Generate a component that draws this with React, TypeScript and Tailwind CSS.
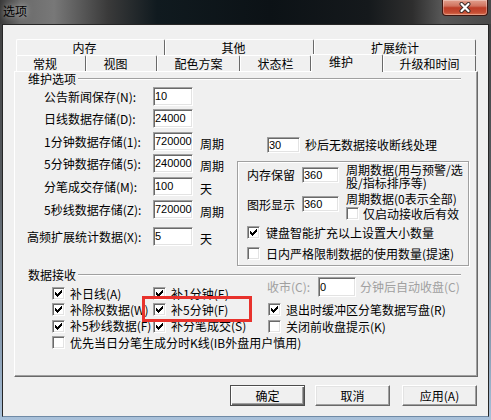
import React from 'react';

const CK =
  'M6 0h1v1h-1zM5 1h2v1h-2zM0 2h1v1h-1zM4 2h3v1h-3zM0 3h2v1h-2zM3 3h3v1h-3zM0 4h5v1h-5zM1 5h3v1h-3zM2 6h1v1h-1z';

function Box({ on }: { on?: boolean }) {
  return (
    <span className="flex h-[13px] w-[13px] shrink-0 items-center justify-center border border-t-[#a0a0a0] border-l-[#a0a0a0] border-r-white border-b-white bg-white shadow-[inset_1px_1px_0_#696969,inset_-1px_-1px_0_#e3e3e3]">
      {on && (
        <svg width="7" height="7" viewBox="0 0 7 7" shapeRendering="crispEdges">
          <path d={CK} fill="#000" />
        </svg>
      )}
    </span>
  );
}

function Field({ v, cls }: { v: string; cls: string }) {
  return (
    <div
      className={`flex shrink-0 items-center overflow-hidden border border-t-[#a0a0a0] border-l-[#a0a0a0] border-r-white border-b-white bg-white pl-[1px] font-['Liberation_Sans',sans-serif] text-[11px] leading-none shadow-[inset_1px_1px_0_#696969,inset_-1px_-1px_0_#e3e3e3] ${cls}`}
    >
      {v}
    </div>
  );
}

function GroupHead({ title }: { title: string }) {
  return (
    <div className="flex h-[12px] w-[446px] items-center pl-[11px]">
      <span className="whitespace-nowrap px-[2px]">{title}</span>
      <span className="h-[2px] flex-1 border-t border-b border-t-[#a0a0a0] border-b-white" />
    </div>
  );
}

function Tab({ children, cls }: { children: React.ReactNode; cls: string }) {
  return (
    <div
      className={`flex h-full shrink-0 items-center justify-center rounded-t-[2px] border-t border-l border-r border-t-white border-l-white border-r-[#696969] bg-[#f0f0f0] whitespace-nowrap ${cls}`}
    >
      {children}
    </div>
  );
}

function Btn({ children, def, cls }: { children: React.ReactNode; def?: boolean; cls?: string }) {
  return (
    <div
      className={`flex h-[21px] w-[75px] items-center justify-center bg-[#f0f0f0] ${
        def
          ? 'border border-[#4d4d4d] shadow-[inset_1px_1px_0_#fff,inset_-1px_-1px_0_#696969,inset_-2px_-2px_0_#a0a0a0]'
          : 'border border-t-white border-l-white border-r-[#696969] border-b-[#696969] shadow-[inset_-1px_-1px_0_#a0a0a0,inset_1px_1px_0_#e3e3e3]'
      } ${cls ?? ''}`}
    >
      {children}
    </div>
  );
}

const rows = [
  { l: '公告新闻保存(N):', v: '10', mt: '', u: '' },
  { l: '日线数据存储(D):', v: '24000', mt: 'mt-[3px]', u: '' },
  { l: '1分钟数据存储(1):', v: '720000', mt: 'mt-[4px]', u: '周期' },
  { l: '5分钟数据存储(5):', v: '240000', mt: 'mt-[3px]', u: '周期' },
  { l: '分笔成交存储(M):', v: '100', mt: 'mt-[4px]', u: '天' },
  { l: '5秒线数据存储(Z):', v: '720000', mt: 'mt-[4px]', u: '周期' },
];

const grid: [string, boolean][] = [
  ['补日线(A)', true],
  ['补1分钟(E)', true],
  ['补除权数据(W)', true],
  ['补5分钟(F)', true],
  ['补5秒线数据(F)', true],
  ['补分笔成交(S)', true],
];

export default function App() {
  return (
    <div className="h-[420px] w-[491px] overflow-hidden bg-[linear-gradient(180deg,#3d3d3d_0%,#585d62_45%,#8ea3b9_85%,#a9c1da_100%)] font-['Noto_Sans_CJK_SC',sans-serif] text-[12px] leading-[12px] text-black">
      {/* title bar */}
      <div className="flex h-[24px] items-start justify-between bg-[linear-gradient(90deg,#393939_0%,#6a6a6a_4%,#787878_11%,#3a3a3a_22%,#101a1f_32%,#0c1216_55%,#15191c_75%,#2e2e2e_84%,#575757_90%,#4a4a4a_100%)]">
        <span className="ml-[3px] mt-[5px] [text-shadow:0_0_6px_rgba(255,255,255,0.75)]">选项</span>
        <div className="mr-[3px] flex h-[16px] w-[46px] items-center justify-center rounded-b-[4px] border border-t-0 border-[#3f1610] bg-[linear-gradient(180deg,#e2a08e_0%,#d0735f_40%,#bd3d27_52%,#c44c33_82%,#dc7553_100%)] shadow-[inset_0_0_0_1px_rgba(255,255,255,0.3)]">
          <svg width="12" height="11" viewBox="0 0 12 11">
            <path d="M2.5 2 L9.5 9 M9.5 2 L2.5 9" stroke="#3a2a28" strokeWidth="4" strokeLinecap="round" />
            <path d="M2.5 2 L9.5 9 M9.5 2 L2.5 9" stroke="#fff" strokeWidth="2.2" strokeLinecap="round" />
          </svg>
        </div>
      </div>

      {/* client */}
      <div className="ml-[2px] h-[393px] w-[487px] border border-[#262626] border-b-[#6f8aa6] bg-[#f0f0f0]">
        {/* tabs */}
        <div className="ml-[13px] mt-[14px] w-[460px]">
          <div className="flex h-[16px]">
            <Tab cls="w-[149px] pr-[12px]">内存</Tab>
            <Tab cls="w-[149px] pr-[12px]">其他</Tab>
            <Tab cls="w-[162px]">扩展统计</Tab>
          </div>
          <div className="flex h-[16px] items-end">
            <Tab cls="w-[70px] pr-[12px]">常规</Tab>
            <Tab cls="w-[71px] pr-[12px]">视图</Tab>
            <Tab cls="w-[83px]">配色方案</Tab>
            <Tab cls="w-[71px]">状态栏</Tab>
            <div className="relative z-10 -mb-px flex h-[18px] w-[72px] shrink-0 items-start justify-center rounded-t-[2px] border-t border-l border-r border-t-white border-l-white border-r-[#696969] bg-[#f0f0f0] pr-[12px] pt-[1px]">
              维护
            </div>
            <Tab cls="w-[93px]">升级和时间</Tab>
          </div>
        </div>

        {/* panel */}
        <div className="relative ml-[11px] h-[306px] w-[464px] border border-t-white border-l-white border-r-[#696969] border-b-[#696969] shadow-[inset_-1px_-1px_0_#a0a0a0]">
          <div className="mt-[1px]">
            <GroupHead title="维护选项" />
          </div>
          <div className="mt-[2px] flex">
            <div className="w-[222px] shrink-0">
              {rows.map((r) => (
                <div key={r.l} className={`flex h-[19px] items-center pl-[29px] ${r.mt}`}>
                  <span className="w-[109px] whitespace-nowrap">{r.l}</span>
                  <Field v={r.v} cls="h-[19px] w-[40px]" />
                  {r.u && <span className="ml-[7px] mt-[4px]">{r.u}</span>}
                </div>
              ))}
              <div className="mt-[8px] flex h-[19px] items-center pl-[12px]">
                <span className="w-[126px] whitespace-nowrap">高频扩展统计数据(X):</span>
                <Field v="5" cls="h-[19px] w-[40px]" />
                <span className="ml-[7px] mt-[4px]">天</span>
              </div>
            </div>
            <div className="pt-[50px]">
              <div className="flex h-[16px] items-center pl-[30px]">
                <Field v="30" cls="h-[16px] w-[33px]" />
                <span className="ml-[5px] whitespace-nowrap">秒后无数据接收断线处理</span>
              </div>
              <div className="mt-[8px] h-[105px] w-[232px] border border-[#a0a0a0] shadow-[inset_1px_1px_0_#fff,1px_1px_0_#fff]">
                <div className="mt-[2px] flex h-[24px] items-start">
                  <span className="ml-[9px] mt-[5px] w-[55px] whitespace-nowrap">内存保留</span>
                  <Field v="360" cls="mt-[3px] h-[16px] w-[37px]" />
                  <div className="-mt-[1px] ml-[7px] whitespace-nowrap leading-[13px]">
                    周期数据(用与预警/选
                    <br />
                    股/指标排序等)
                  </div>
                </div>
                <div className="mt-[6px] flex items-start">
                  <span className="ml-[9px] mt-[5px] w-[55px] whitespace-nowrap">图形显示</span>
                  <Field v="360" cls="mt-[2px] h-[16px] w-[37px]" />
                  <div className="ml-[7px] whitespace-nowrap">
                    <div className="-mt-[1px] h-[12px]">周期数据(0表示全部)</div>
                    <div className="mt-[2px] flex h-[13px] items-center gap-[4px]">
                      <Box />
                      <span>仅启动接收后有效</span>
                    </div>
                  </div>
                </div>
                <div className="mt-[6px] flex h-[13px] items-center gap-[6px] pl-[9px] whitespace-nowrap">
                  <Box on />
                  <span>键盘智能扩充以上设置大小数量</span>
                </div>
                <div className="mt-[8px] flex h-[13px] items-center gap-[6px] pl-[9px] whitespace-nowrap">
                  <Box />
                  <span>日内严格限制数据的使用数量(提速)</span>
                </div>
              </div>
            </div>
          </div>

          <div className="mt-[3px]">
            <GroupHead title="数据接收" />
          </div>
          <div className="-mt-[4px] flex">
            <div className="grid shrink-0 grid-cols-[101px_114px] pl-[37px] pt-[9px]">
              {grid.map(([t, on], i) => (
                <div
                  key={t}
                  className={`flex h-[15px] items-center gap-[5px] overflow-hidden whitespace-nowrap ${
                    i % 2 === 0 ? 'w-[101px]' : 'w-[114px]'
                  }`}
                >
                  <Box on={on} />
                  <span>{t}</span>
                </div>
              ))}
            </div>
            <div className="flex flex-col whitespace-nowrap">
              <div className="flex h-[20px] items-center">
                <span className="w-[51px] text-[#a0a0a0]">收市(C):</span>
                <Field v="0" cls="h-[20px] w-[38px]" />
                <span className="ml-[4px] text-[#a0a0a0]">分钟后自动收盘(C)</span>
              </div>
              <div className="mt-[4px] flex h-[17px] items-center gap-[5px] pl-[1px]">
                <Box on />
                <span>退出时缓冲区分笔数据写盘(R)</span>
              </div>
              <div className="flex h-[17px] items-center gap-[5px] pl-[1px]">
                <Box />
                <span>关闭前收盘提示(K)</span>
              </div>
            </div>
          </div>
          <div className="mt-[1px] flex h-[13px] items-center gap-[5px] whitespace-nowrap pl-[37px]">
            <Box />
            <span>优先当日分笔生成分时K线(IB外盘用户慎用)</span>
          </div>

          <div className="absolute left-[127px] top-[224px] h-[26px] w-[110px] border-[3px] border-[#e8322c]" />
        </div>

        {/* buttons */}
        <div className="mt-[8px] flex justify-end pr-[11px]">
          <Btn def>确定</Btn>
          <Btn cls="ml-[10px]">取消</Btn>
          <Btn cls="ml-[12px]">应用(A)</Btn>
        </div>
      </div>
    </div>
  );
}
